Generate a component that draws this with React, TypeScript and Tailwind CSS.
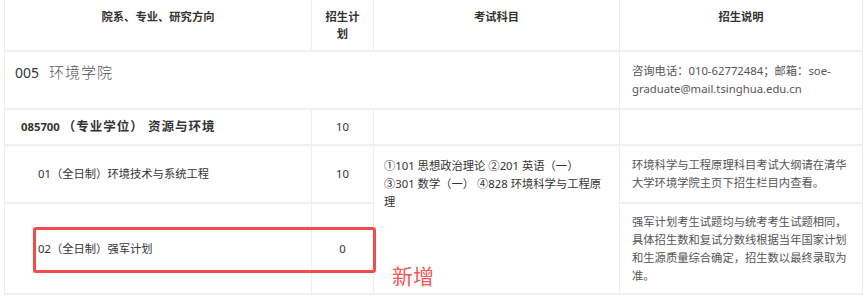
import React from 'react';

const cellBorder = 'border-x border-x-[#eeeeee] border-b-2 border-b-[#f0f0f0]';

export default function App() {
  return (
    <div className="relative w-[867px] h-[298px] overflow-hidden bg-white font-['Noto_Sans','Noto_Sans_CJK_SC',sans-serif] text-[11.3px] leading-[18px] text-[#333]">
      <table className="ml-[4px] w-[858px] table-fixed border-collapse">
        <colgroup>
          <col className="w-[307px]" />
          <col className="w-[62px]" />
          <col className="w-[246px]" />
          <col className="w-[243px]" />
        </colgroup>
        <thead>
          <tr className="h-[51px]">
            <th className={`${cellBorder} align-top pt-[8px] text-center font-bold leading-[17px]`}>院系、专业、研究方向</th>
            <th className={`${cellBorder} align-top pt-[8px] text-center font-bold leading-[17px]`}>
              招生计<br />划
            </th>
            <th className={`${cellBorder} align-top pt-[8px] text-center font-bold leading-[17px]`}>考试科目</th>
            <th className={`${cellBorder} align-top pt-[8px] text-center font-bold leading-[17px]`}>招生说明</th>
          </tr>
        </thead>
        <tbody>
          <tr className="h-[58px]">
            <td colSpan={3} className={`${cellBorder} align-top pt-[11px] pl-[10px]`}>
              <span className="text-[14px] text-[#333]">005</span>
              <span className="ml-[10px] text-[15px] font-light tracking-[1px] text-[#555]">环境学院</span>
            </td>
            <td className={`${cellBorder} align-middle px-[12px] text-[#555] whitespace-nowrap`}>
              咨询电话：010-62772484；邮箱：soe-
              <br />
              graduate@mail.tsinghua.edu.cn
            </td>
          </tr>
          <tr className="h-[36px]">
            <td className={`${cellBorder} align-middle pl-[16px] font-bold whitespace-nowrap`}>
              <span className="text-[11.3px]">085700</span>
              <span className="ml-[3px] text-[12.5px] tracking-[1px]">（专业学位） 资源与环境</span>
            </td>
            <td className={`${cellBorder} align-middle text-center`}>10</td>
            <td className={cellBorder}></td>
            <td className={cellBorder}></td>
          </tr>
          <tr className="h-[58px]">
            <td className={`${cellBorder} align-middle pl-[33px]`}>01（全日制）环境技术与系统工程</td>
            <td className={`${cellBorder} align-middle text-center`}>10</td>
            <td rowSpan={2} className={`${cellBorder} align-top pt-[11px] px-[10px] whitespace-nowrap`}>
              ①101 思想政治理论 ②201 英语（一）
              <br />
              ③301 数学（一） ④828 环境科学与工程原
              <br />理
            </td>
            <td className={`${cellBorder} align-middle px-[12px] text-[#555] whitespace-nowrap`}>
              环境科学与工程原理科目考试大纲请在清华
              <br />
              大学环境学院主页下招生栏目内查看。
            </td>
          </tr>
          <tr className="h-[91px]">
            <td className={`${cellBorder} align-middle pl-[33px]`}>02（全日制）强军计划</td>
            <td className={`${cellBorder} align-middle text-center`}>0</td>
            <td className={`${cellBorder} align-middle px-[12px] text-[#555] whitespace-nowrap`}>
              强军计划考生试题均与统考考生试题相同，
              <br />
              具体招生数和复试分数线根据当年国家计划
              <br />
              和生源质量综合确定，招生数以最终录取为
              <br />
              准。
            </td>
          </tr>
        </tbody>
      </table>

      {/* annotation overlay */}
      <div className="absolute left-[33px] top-[227px] w-[343px] h-[46px] rounded-[3px] border-[3px] border-[#f44b4d]" />
      <div className="absolute left-[392px] top-[261px] text-[21px] leading-[30px] text-[#f45656]">新增</div>
    </div>
  );
}
